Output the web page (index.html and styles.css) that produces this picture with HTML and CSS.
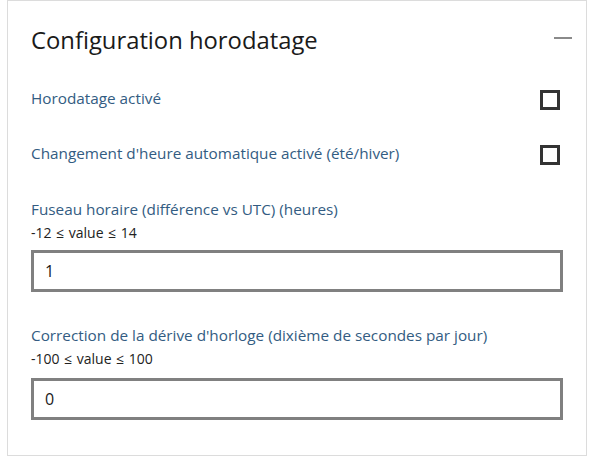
FILE: index.html
```html
<!DOCTYPE html>
<html lang="fr">
<head>
<meta charset="utf-8">
<link rel="stylesheet" href="styles.css">
</head>
<body>
<section class="card">
  <header class="card-header">
    <h1 class="title">Configuration horodatage</h1>
    <span class="collapse"></span>
  </header>
  <div class="row check-row first">
    <span class="label">Horodatage activé</span>
    <span class="checkbox"></span>
  </div>
  <div class="row check-row second">
    <span class="label">Changement d'heure automatique activé (été/hiver)</span>
    <span class="checkbox"></span>
  </div>
  <div class="field field-one">
    <span class="label">Fuseau horaire (différence vs UTC) (heures)</span>
    <span class="hint">-12 ≤ value ≤ 14</span>
    <div class="input">1</div>
  </div>
  <div class="field field-two">
    <span class="label">Correction de la dérive d'horloge (dixième de secondes par jour)</span>
    <span class="hint">-100 ≤ value ≤ 100</span>
    <div class="input">0</div>
  </div>
</section>
</body>
</html>
```
FILE: styles.css
```css
html, body {
  margin: 0;
  padding: 0;
  background: #fff;
}
body {
  font-family: "Open Sans", "Noto Sans", sans-serif;
  padding: 0 5px 0 7px;
}
.card {
  border: 1px solid #dcdcdc;
  height: 454px;
  box-sizing: content-box;
  padding: 0 23px 0 23px;
  display: flex;
  flex-direction: column;
}
.card-header {
  display: flex;
  align-items: center;
  justify-content: space-between;
  height: 78px;
}
.title {
  margin: 0;
  font-weight: 400;
  font-size: 23.8px;
  line-height: 32px;
  color: #1a1a1a;
}
.collapse {
  width: 18px;
  height: 2px;
  background: #8a8a8a;
  margin-right: -9px;
  margin-top: -4px;
}
.row {
  display: flex;
  align-items: center;
  justify-content: space-between;
}
.check-row {
  height: 20px;
}
.check-row.first { margin-top: 11px; }
.check-row.second { margin-top: 35px; }
.check-row .label {
  margin-top: -4px;
}
.label {
  font-size: 15.3px;
  line-height: 20px;
  color: #335c82;
}
.checkbox {
  width: 14px;
  height: 14px;
  border: 3px solid #333;
  margin-right: 3px;
}
.field {
  display: flex;
  flex-direction: column;
  align-items: flex-start;
}
.field-one { margin-top: 34px; }
.field-two { margin-top: 33px; }
.hint {
  font-size: 14px;
  line-height: 18px;
  color: #222;
  margin-top: 5px;
  word-spacing: 1px;
}
.input {
  box-sizing: border-box;
  margin-top: 8px;
  height: 42px;
  border: 3px solid #808080;
  width: 532px;
  font-size: 16px;
  color: #1a1a1a;
  padding-left: 11px;
  display: flex;
  align-items: center;
}
.field-two .input {
  margin-top: 10px;
}
```
